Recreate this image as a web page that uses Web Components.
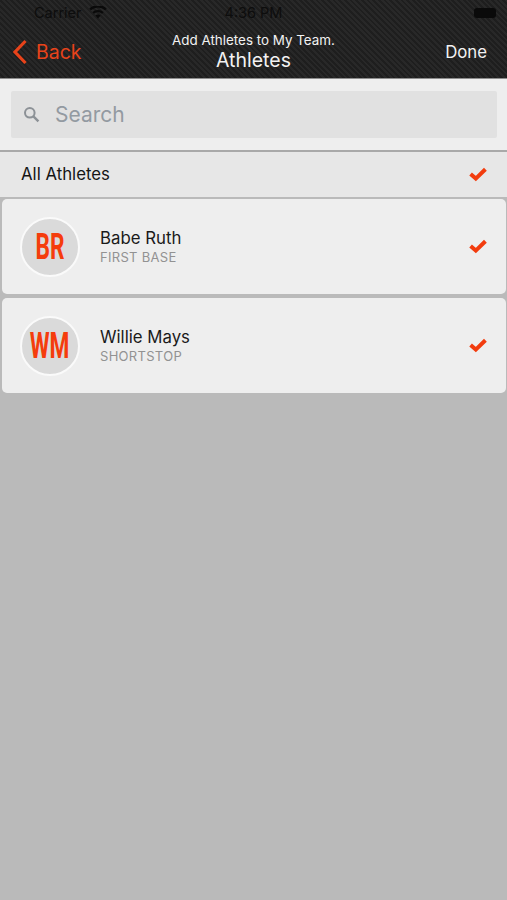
<!DOCTYPE html>
<html>
<head>
<meta charset="utf-8">
<style>
  html, body { margin: 0; height: 100%; }
  body { background: #bababa; font-family: Inter, "Liberation Sans", sans-serif; }
  app-screen { height: 900px; }
</style>
</head>
<body>
<app-screen>
  <nav-bar slot="top" title="Athletes" prompt="Add Athletes to My Team."></nav-bar>
  <search-box slot="top" placeholder="Search"></search-box>
  <all-row slot="top" label="All Athletes"></all-row>
  <athlete-card initials="BR" name="Babe Ruth" position="FIRST BASE"></athlete-card>
  <athlete-card initials="WM" name="Willie Mays" position="SHORTSTOP"></athlete-card>
</app-screen>

<script>
const CHECK = `<svg width="18" height="15" viewBox="0 0 18 15"><path d="M1.6 7 L6.8 11.6 L16.4 2.2" fill="none" stroke="#f23c0e" stroke-width="4"/></svg>`;

class AppScreen extends HTMLElement {
    constructor() {
        super();
        this.attachShadow({ mode: 'open' }).innerHTML = `
            <style>
                :host { display: block; }
                .list { display: flex; flex-direction: column; gap: 4px; padding: 2px 1px 0 2px; }
            </style>
            <slot name="top"></slot>
            <div class="list"><slot></slot></div>
        `;
    }
}

class NavBar extends HTMLElement {
    constructor() {
        super();
        this.attachShadow({ mode: 'open' });
    }
    connectedCallback() {
        this.shadowRoot.innerHTML = `
            <style>
                :host {
                    display: block;
                    height: 78px;
                    box-sizing: content-box;
                    border-bottom: 1px solid #8d8d8d;
                    background:
                        repeating-linear-gradient(45deg, #282828 0 2px, #1e1e1e 2px 4px);
                    color: #f2f2f2;
                    overflow: hidden;
                }
                .status {
                    display: grid;
                    grid-template-columns: 1fr auto 1fr;
                    align-items: center;
                    height: 25px;
                    color: #0d0d0d;
                    font-size: 14.5px;
                }
                .left { display: flex; align-items: center; gap: 7px; padding-left: 34px; }
                .batt { justify-self: end; margin-right: 11px; width: 22px; height: 10px; background: #0a0a0a; border-radius: 3px; }
                .bar {
                    display: grid;
                    grid-template-columns: 1fr auto 1fr;
                    padding: 0 12px;
                    height: 53px;
                }
                .back { display: flex; align-items: center; gap: 8px; color: #e8431a; font-size: 19.5px; height: 53px; }
                .center { text-align: center; margin-top: 7px; }
                .prompt { font-size: 13.4px; line-height: 16px; }
                .title { font-size: 19.5px; line-height: 25px; }
                .done { justify-self: end; align-self: center; margin-right: 8px; font-size: 16.8px; }
            </style>
            <div class="status">
                <div class="left">Carrier
                    <svg width="18" height="13" viewBox="0 0 18 13"><path d="M9 12.6 L6.4 9.4 A4.2 4.2 0 0 1 11.6 9.4 Z M4.9 7.7 L3.4 5.9 A8.8 8.8 0 0 1 14.6 5.9 L13.1 7.7 A6.4 6.4 0 0 0 4.9 7.7 Z M1.9 4.2 L.3 2.4 A13.4 13.4 0 0 1 17.7 2.4 L16.1 4.2 A11 11 0 0 0 1.9 4.2 Z" fill="#0a0a0a"/></svg>
                </div>
                <div>4:36 PM</div>
                <div class="batt"></div>
            </div>
            <div class="bar">
                <div class="back">
                    <svg width="16" height="26" viewBox="0 0 16 26"><path d="M13.5 2 L3 13 L13.5 24" fill="none" stroke="#e8431a" stroke-width="3.2"/></svg>
                    Back
                </div>
                <div class="center">
                    <div class="prompt">${this.getAttribute('prompt')}</div>
                    <div class="title">${this.getAttribute('title')}</div>
                </div>
                <div class="done">Done</div>
            </div>
        `;
    }
}

class SearchBox extends HTMLElement {
    constructor() {
        super();
        this.attachShadow({ mode: 'open' });
    }
    connectedCallback() {
        this.shadowRoot.innerHTML = `
            <style>
                :host {
                    display: block;
                    padding: 12px 10px 12px 11px;
                    background: #eeeeee;
                    border-bottom: 2px solid #a9a9a9;
                }
                .box {
                    display: flex;
                    align-items: center;
                    gap: 15px;
                    height: 47px;
                    padding-left: 12px;
                    background: #e1e1e1;
                    border-radius: 2px;
                    color: #939aa1;
                    font-size: 21px;
                }
            </style>
            <div class="box">
                <svg width="17" height="17" viewBox="0 0 17 17"><circle cx="6.8" cy="6.8" r="4.8" fill="none" stroke="#8c9196" stroke-width="2"/><path d="M10.4 10.4 L15.4 15.4" stroke="#8c9196" stroke-width="2.4"/></svg>
                <span>${this.getAttribute('placeholder')}</span>
            </div>
        `;
    }
}

class AllRow extends HTMLElement {
    constructor() {
        super();
        this.attachShadow({ mode: 'open' });
    }
    connectedCallback() {
        this.shadowRoot.innerHTML = `
            <style>
                :host {
                    display: flex;
                    align-items: center;
                    justify-content: space-between;
                    height: 45px;
                    padding: 0 20px 0 21px;
                    background: #e7e7e7;
                    color: #151515;
                    font-size: 16.8px;
                }
                span { margin-top: -2px; }
                svg { display: block; margin-top: -1px; }
            </style>
            <span>${this.getAttribute('label')}</span>
            ${CHECK}
        `;
    }
}

class AthleteCard extends HTMLElement {
    constructor() {
        super();
        this.attachShadow({ mode: 'open' });
    }
    connectedCallback() {
        this.shadowRoot.innerHTML = `
            <style>
                :host {
                    display: flex;
                    align-items: center;
                    height: 95px;
                    padding: 0 19px 0 18px;
                    background: #eeeeee;
                    border-radius: 5px;
                }
                .avatar {
                    display: flex;
                    align-items: center;
                    justify-content: center;
                    box-sizing: border-box;
                    width: 60px;
                    height: 60px;
                    flex: none;
                    border: 2px solid #fafafa;
                    border-radius: 50%;
                    background: #dadada;
                    color: #f53c0c;
                    font-size: 36px;
                    font-family: Roboto, "Liberation Sans", sans-serif;
                    font-weight: 700;
                }
                .avatar span { display: inline-block; transform: scaleX(.63); white-space: nowrap; }
                .info { flex: 1; margin-left: 20px; }
                .name { font-size: 16.8px; line-height: 21px; color: #1a1a1a; }
                .pos { font-size: 13px; line-height: 16px; color: #929292; letter-spacing: .3px; }
                svg { display: block; }
            </style>
            <div class="avatar"><span>${this.getAttribute('initials')}</span></div>
            <div class="info">
                <div class="name">${this.getAttribute('name')}</div>
                <div class="pos">${this.getAttribute('position')}</div>
            </div>
            ${CHECK}
        `;
    }
}

customElements.define('app-screen', AppScreen);
customElements.define('nav-bar', NavBar);
customElements.define('search-box', SearchBox);
customElements.define('all-row', AllRow);
customElements.define('athlete-card', AthleteCard);
</script>
</body>
</html>
